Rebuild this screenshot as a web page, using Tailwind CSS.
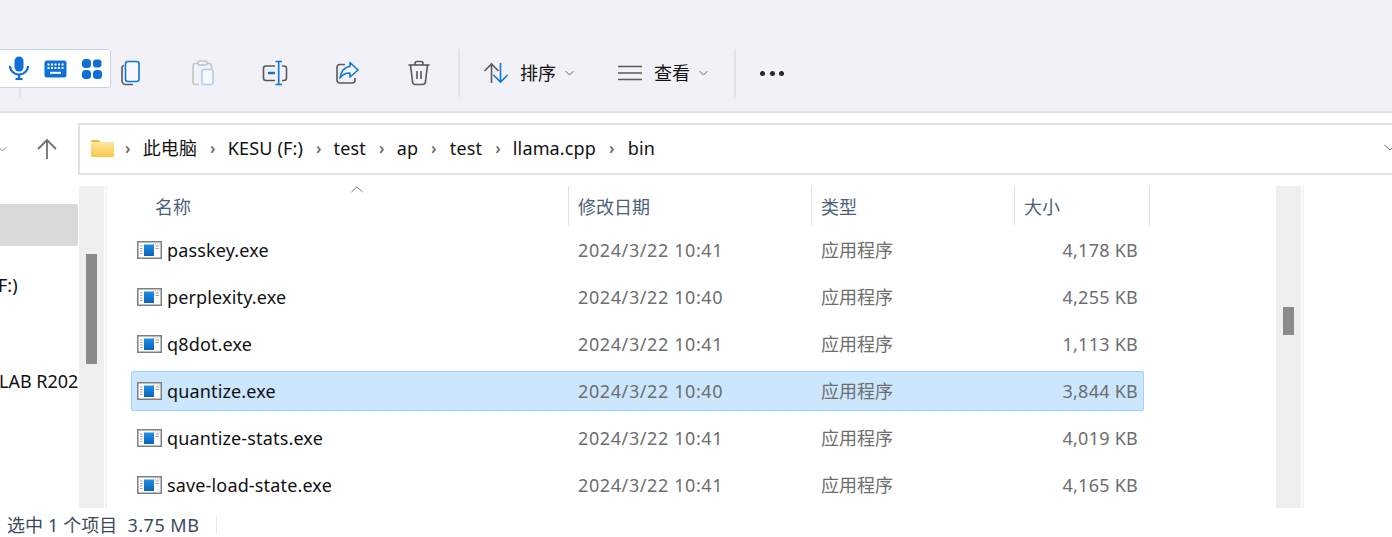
<!DOCTYPE html>
<html lang="zh-CN">
<head>
    <meta charset="UTF-8">
    <title>bin</title>
    <script src="https://cdn.jsdelivr.net/npm/@tailwindcss/browser@4"></script>
</head>
<body class="bg-white overflow-hidden font-['Noto_Sans','Noto_Sans_CJK_SC',sans-serif] text-[18px] text-[#111]">
<!-- shared exe icon -->
<svg class="absolute w-0 h-0">
    <defs>
        <linearGradient id="exeBlue" x1="0" y1="0" x2="0" y2="1">
            <stop offset="0" stop-color="#1e90e6"/>
            <stop offset="1" stop-color="#0a63b8"/>
        </linearGradient>
        <linearGradient id="folderFill" x1="0" y1="0" x2="0" y2="1">
            <stop offset="0" stop-color="#fde7a0"/>
            <stop offset="1" stop-color="#f9c74a"/>
        </linearGradient>
        <symbol id="exe" viewBox="0 0 25 18">
            <rect x="0.750" y="0.750" width="23.500" height="16.500" fill="#fff" stroke="#7f7f7f" stroke-width="1.500"/>
            <path d="M16 3 H23" stroke="#bdbdbd" stroke-dasharray="1 1"/>
            <rect x="7" y="3.500" width="10" height="11.500" fill="url(#exeBlue)"/>
            <path d="M3 5 H5.500 M3 7.500 H5.500 M3 10 H5.500 M3 12.500 H5.500 M18.500 5 H22 M18.500 7.500 H22" stroke="#a8a8a8"/>
        </symbol>
    </defs>
</svg>
<div class="relative w-[1392px] h-[537px] flex flex-col overflow-hidden">

    <!-- toolbar -->
    <div class="h-[113px] shrink-0 bg-[#f1f1f7] border-b-2 border-[#e0e0e6] pt-[49px] pl-[19px] flex items-start">
        <div class="w-[2px] h-[48px] bg-[#e2e2e8]"></div>
        <div class="flex items-center h-[48px] pl-[74px]">
            <div class="w-[72px] flex justify-center">
                <svg width="24" height="26" viewBox="0 0 24 26" fill="none" stroke-width="1.600">
                    <path d="M5 5.500 A2.500 2.500 0 0 0 3 8 V21 A3.500 3.500 0 0 0 6.500 24.500 H14" stroke="#5a5a5a"/>
                    <rect x="6.500" y="1.500" width="13.500" height="20" rx="2.500" stroke="#0f78d4" fill="#f8f9fc"/>
                </svg>
            </div>
            <div class="w-[72px] flex justify-center">
                <svg width="24" height="26" viewBox="0 0 24 26" fill="none" stroke-width="1.600">
                    <path d="M8 24.500 H4.500 A2.500 2.500 0 0 1 2 22 V6 A2.500 2.500 0 0 1 4.500 3.500 H18 A2.500 2.500 0 0 1 20.500 6 V9" stroke="#c4c4c8"/>
                    <rect x="7" y="1" width="9" height="4" rx="1.500" stroke="#c4c4c8" fill="#f1f1f7"/>
                    <rect x="11" y="9.500" width="11" height="15" rx="2" stroke="#a9d0f0" fill="#f8f9fc"/>
                </svg>
            </div>
            <div class="w-[72px] flex justify-center">
                <svg width="26" height="26" viewBox="0 0 26 26" fill="none" stroke-width="1.600">
                    <path d="M13 6 H4 A2.500 2.500 0 0 0 1.500 8.500 V18 A2.500 2.500 0 0 0 4 20.500 H13" stroke="#5a5a5a"/>
                    <path d="M20 6 H22 A2.500 2.500 0 0 1 24.500 8.500 V18 A2.500 2.500 0 0 1 22 20.500 H20" stroke="#5a5a5a"/>
                    <path d="M13 13 H6" stroke="#0f78d4" stroke-width="2.500"/>
                    <path d="M13.500 1.500 H20 M16.700 1.500 V24.500 M13.500 24.500 H20" stroke="#0f78d4"/>
                </svg>
            </div>
            <div class="w-[72px] flex justify-center">
                <svg width="24" height="24" viewBox="0 0 24 24" fill="none" stroke-width="1.600">
                    <path d="M10 3.500 H5 A3 3 0 0 0 2 6.500 V19 A3 3 0 0 0 5 22 H17 A3 3 0 0 0 20 19 V17" stroke="#5a5a5a"/>
                    <path d="M15 1.500 L23 9 L15 16 V12 C11 12 7.500 13 5 17 C5.500 11 9 6 15 5.500 Z" stroke="#0f78d4" fill="#f8f9fc" stroke-linejoin="round"/>
                </svg>
            </div>
            <div class="w-[72px] flex justify-center">
                <svg width="24" height="26" viewBox="0 0 24 26" fill="none" stroke="#5a5a5a" stroke-width="1.600">
                    <path d="M1.500 5 H22.500"/>
                    <path d="M8 5 V3.500 A2 2 0 0 1 10 1.500 H14 A2 2 0 0 1 16 3.500 V5"/>
                    <path d="M3.500 5 L5.500 21.500 A3 3 0 0 0 8.500 24.500 H15.500 A3 3 0 0 0 18.500 21.500 L20.500 5"/>
                    <path d="M10 11 V19 M14 11 V19"/>
                </svg>
            </div>
        </div>
        <div class="w-[2px] h-[48px] bg-[#e2e2e8] ml-[3px]"></div>
        <div class="flex items-center h-[48px] pl-[23px]">
            <svg width="26" height="22" viewBox="0 0 26 22" fill="none" stroke-width="1.600">
                <path d="M8.500 21 V2 M1.500 9 L8.500 2 L15.500 9" stroke="#5a5a5a"/>
                <path d="M17.500 1 V20 M10.500 13 L17.500 20 L24.500 13" stroke="#0f78d4"/>
            </svg>
            <span class="ml-[11px] leading-none">排序</span>
            <svg class="ml-[9px]" width="9" height="6" viewBox="0 0 9 6" fill="none" stroke="#6b6b6b"><path d="M0.500 1 L4.500 5 L8.500 1"/></svg>
            <svg class="ml-[44px]" width="24" height="16" viewBox="0 0 24 16" fill="none" stroke="#5a5a5a" stroke-width="1.600"><path d="M0 1.500 H24 M0 8 H24 M0 14.500 H24"/></svg>
            <span class="ml-[12px] leading-none">查看</span>
            <svg class="ml-[9px]" width="9" height="6" viewBox="0 0 9 6" fill="none" stroke="#6b6b6b"><path d="M0.500 1 L4.500 5 L8.500 1"/></svg>
        </div>
        <div class="w-[2px] h-[48px] bg-[#e2e2e8] ml-[26px]"></div>
        <div class="flex items-center gap-[4.500px] h-[48px] pl-[24px]">
            <span class="w-[5px] h-[5px] rounded-full bg-[#2b2b2b]"></span>
            <span class="w-[5px] h-[5px] rounded-full bg-[#2b2b2b]"></span>
            <span class="w-[5px] h-[5px] rounded-full bg-[#2b2b2b]"></span>
        </div>
    </div>

    <!-- address row -->
    <div class="h-[73px] shrink-0 flex items-start pt-[10px]">
        <div class="w-[78px] h-[52px] flex items-center shrink-0">
            <svg class="-ml-[2px]" width="9" height="6" viewBox="0 0 9 6" fill="none" stroke="#8a8a8a"><path d="M0.500 1 L4.500 5 L8.500 1"/></svg>
            <svg class="ml-[29px]" width="22" height="22" viewBox="0 0 22 22" fill="none" stroke="#707070" stroke-width="1.800"><path d="M11 21 V2 M2 11 L11 2 L20 11"/></svg>
        </div>
        <div class="w-[1330px] h-[52px] border-2 border-[#e2e2e4] flex items-center pl-[11px] pb-[2px] shrink-0 relative tracking-[0.15px]">
            <svg width="23" height="18" viewBox="0 0 23 18">
                <path d="M0 2 A1 1 0 0 1 1 1 H7.500 L10 3 H0 Z" fill="#f0b93a"/>
                <rect x="0" y="3" width="23" height="15" fill="url(#folderFill)"/>
            </svg>
            <span class="ml-[11px] text-[#6b6b6b] text-[16px] font-semibold leading-none">›</span>
            <span class="ml-[12px] leading-none">此电脑</span>
            <span class="ml-[13px] text-[#6b6b6b] text-[16px] font-semibold leading-none">›</span>
            <span class="ml-[12px] leading-none">KESU (F:)</span>
            <span class="ml-[13px] text-[#6b6b6b] text-[16px] font-semibold leading-none">›</span>
            <span class="ml-[12px] leading-none">test</span>
            <span class="ml-[13px] text-[#6b6b6b] text-[16px] font-semibold leading-none">›</span>
            <span class="ml-[12px] leading-none">ap</span>
            <span class="ml-[13px] text-[#6b6b6b] text-[16px] font-semibold leading-none">›</span>
            <span class="ml-[13px] leading-none">test</span>
            <span class="ml-[13px] text-[#6b6b6b] text-[16px] font-semibold leading-none">›</span>
            <span class="ml-[12px] leading-none">llama.cpp</span>
            <span class="ml-[13px] text-[#6b6b6b] text-[16px] font-semibold leading-none">›</span>
            <span class="ml-[13px] leading-none">bin</span>
            <svg class="absolute left-[1304px] top-[19px]" width="12" height="7" viewBox="0 0 12 7" fill="none" stroke="#6b6b6b"><path d="M0.500 1 L6 6 L11.500 1"/></svg>
        </div>
    </div>

    <!-- main -->
    <div class="h-[322px] shrink-0 flex">
        <!-- nav pane -->
        <div class="w-[79px] shrink-0 overflow-hidden whitespace-nowrap pt-[18px]">
            <div class="h-[42px] w-[78px] bg-[#d9d9d9] rounded-r-[2px]"></div>
            <div class="h-[48px] pt-[28px] leading-[22px] -ml-[2px]">F:)</div>
            <div class="h-[48px]"></div>
            <div class="leading-[22px] -ml-[1px] pt-[28px]">LAB R2022</div>
        </div>
        <div class="w-[25px] shrink-0 bg-[#efefef] pt-[68px] flex justify-center">
            <div class="w-[11px] h-[110px] bg-[#8a8a8a]"></div>
        </div>
        <div class="w-[2px] ml-[1px] shrink-0 bg-[#f4f4f4]"></div>

        <!-- file list -->
        <div class="w-[1169px] shrink-0 relative pl-[24px]">
            <svg class="absolute left-[244px] top-0" width="12" height="7" viewBox="0 0 12 7" fill="none" stroke="#7a7a7a"><path d="M0.500 6 L6 0.800 L11.500 6"/></svg>
            <!-- header -->
            <div class="h-[40px] flex text-[#4c607a]">
                <div class="w-[438px] pl-[24px] pt-[2px] flex items-center border-r border-[#e3e3e3]">名称</div>
                <div class="w-[243px] pl-[9px] pt-[2px] flex items-center border-r border-[#e3e3e3]">修改日期</div>
                <div class="w-[203px] pl-[9px] pt-[2px] flex items-center border-r border-[#e3e3e3]">类型</div>
                <div class="w-[135px] pl-[9px] pt-[2px] flex items-center border-r border-[#e3e3e3]">大小</div>
            </div>
            <!-- rows -->
            <div class="w-[1013px] flex flex-col">
                <div class="h-[47px] flex items-center">
                    <div class="w-[447px] pl-[6px] flex items-center gap-[5px]">
                        <svg width="25" height="18"><use href="#exe"/></svg>
                        <span class="pt-[2px] tracking-[0.15px]">passkey.exe</span>
                    </div>
                    <div class="w-[243px] pt-[2px] text-[#6e6e6e] tracking-[0.6px]">2024/3/22 10:41</div>
                    <div class="w-[193px] pt-[2px] text-[#6e6e6e]">应用程序</div>
                    <div class="w-[124px] pt-[2px] text-right text-[#6e6e6e] tracking-[0.25px]">4,178 KB</div>
                </div>
                <div class="h-[47px] flex items-center">
                    <div class="w-[447px] pl-[6px] flex items-center gap-[5px]">
                        <svg width="25" height="18"><use href="#exe"/></svg>
                        <span class="pt-[2px] tracking-[0.15px]">perplexity.exe</span>
                    </div>
                    <div class="w-[243px] pt-[2px] text-[#6e6e6e] tracking-[0.6px]">2024/3/22 10:40</div>
                    <div class="w-[193px] pt-[2px] text-[#6e6e6e]">应用程序</div>
                    <div class="w-[124px] pt-[2px] text-right text-[#6e6e6e] tracking-[0.25px]">4,255 KB</div>
                </div>
                <div class="h-[47px] flex items-center">
                    <div class="w-[447px] pl-[6px] flex items-center gap-[5px]">
                        <svg width="25" height="18"><use href="#exe"/></svg>
                        <span class="pt-[2px] tracking-[0.15px]">q8dot.exe</span>
                    </div>
                    <div class="w-[243px] pt-[2px] text-[#6e6e6e] tracking-[0.6px]">2024/3/22 10:41</div>
                    <div class="w-[193px] pt-[2px] text-[#6e6e6e]">应用程序</div>
                    <div class="w-[124px] pt-[2px] text-right text-[#6e6e6e] tracking-[0.25px]">1,113 KB</div>
                </div>
                <div class="h-[47px] flex items-center">
                    <div class="h-[40px] w-full flex items-center bg-[#cbe6fd] border border-[#99d1ff] rounded-[2px]">
                        <div class="w-[446px] pl-[5px] flex items-center gap-[5px]">
                            <svg width="25" height="18"><use href="#exe"/></svg>
                            <span class="pt-[2px] tracking-[0.15px]">quantize.exe</span>
                        </div>
                        <div class="w-[243px] pt-[2px] text-[#6e6e6e] tracking-[0.6px]">2024/3/22 10:40</div>
                        <div class="w-[193px] pt-[2px] text-[#6e6e6e]">应用程序</div>
                        <div class="w-[124px] pt-[2px] text-right text-[#6e6e6e] tracking-[0.25px]">3,844 KB</div>
                    </div>
                </div>
                <div class="h-[47px] flex items-center">
                    <div class="w-[447px] pl-[6px] flex items-center gap-[5px]">
                        <svg width="25" height="18"><use href="#exe"/></svg>
                        <span class="pt-[2px] tracking-[0.15px]">quantize-stats.exe</span>
                    </div>
                    <div class="w-[243px] pt-[2px] text-[#6e6e6e] tracking-[0.6px]">2024/3/22 10:41</div>
                    <div class="w-[193px] pt-[2px] text-[#6e6e6e]">应用程序</div>
                    <div class="w-[124px] pt-[2px] text-right text-[#6e6e6e] tracking-[0.25px]">4,019 KB</div>
                </div>
                <div class="h-[47px] flex items-center">
                    <div class="w-[447px] pl-[6px] flex items-center gap-[5px]">
                        <svg width="25" height="18"><use href="#exe"/></svg>
                        <span class="pt-[2px] tracking-[0.15px]">save-load-state.exe</span>
                    </div>
                    <div class="w-[243px] pt-[2px] text-[#6e6e6e] tracking-[0.6px]">2024/3/22 10:41</div>
                    <div class="w-[193px] pt-[2px] text-[#6e6e6e]">应用程序</div>
                    <div class="w-[124px] pt-[2px] text-right text-[#6e6e6e] tracking-[0.25px]">4,165 KB</div>
                </div>
            </div>
        </div>
        <div class="w-[25px] shrink-0 bg-[#efefef] pt-[121px] flex justify-center">
            <div class="w-[11px] h-[28px] bg-[#8a8a8a]"></div>
        </div>
        <div class="w-[2px] ml-[1px] shrink-0 bg-[#f4f4f4]"></div>
    </div>

    <!-- status bar -->
    <div class="flex-1 flex items-center pl-[7px] pt-[5px] text-[#3c4a5c]">
        <span class="leading-none tracking-[0.1px]">选中 1 个项目</span>
        <span class="ml-[10px] leading-none tracking-[0.5px]">3.75 MB</span>
        <div class="w-px h-[18px] bg-[#e8e8e8] ml-[17px]"></div>
    </div>

    <!-- IME floating bar -->
    <div class="absolute left-[-6px] top-[49px] w-[117px] h-[39px] bg-white border border-[#c4d5e8] rounded-[3px] flex items-center pl-[14px] gap-[15px]">
        <svg width="20" height="25" viewBox="0 0 20 25" fill="#0f6fd8">
            <rect x="5.500" y="0.500" width="9" height="15" rx="4.500"/>
            <path d="M1 10 A9 8.500 0 0 0 19 10" fill="none" stroke="#0f6fd8" stroke-width="2.200"/>
            <rect x="8.800" y="19" width="2.400" height="3"/>
            <rect x="6.500" y="22" width="7" height="2"/>
        </svg>
        <svg width="23" height="18" viewBox="0 0 23 18">
            <rect x="0.500" y="0.500" width="22" height="17" rx="2.500" fill="#0f6fd8"/>
            <path d="M3.500 4.500 H19.500 M3.500 8 H19.500" stroke="#fff" stroke-width="2" stroke-dasharray="2 1.500"/>
            <path d="M6 12.800 H17" stroke="#fff" stroke-width="2"/>
        </svg>
        <svg width="20" height="20" viewBox="0 0 20 20" fill="#0f6fd8">
            <rect x="0" y="0" width="9" height="9" rx="3.500"/>
            <rect x="11" y="0.500" width="8.500" height="8" rx="3"/>
            <rect x="0" y="11" width="9" height="9" rx="3.500"/>
            <rect x="11" y="11" width="9" height="9" rx="3.500"/>
        </svg>
    </div>
</div>
</body>
</html>
